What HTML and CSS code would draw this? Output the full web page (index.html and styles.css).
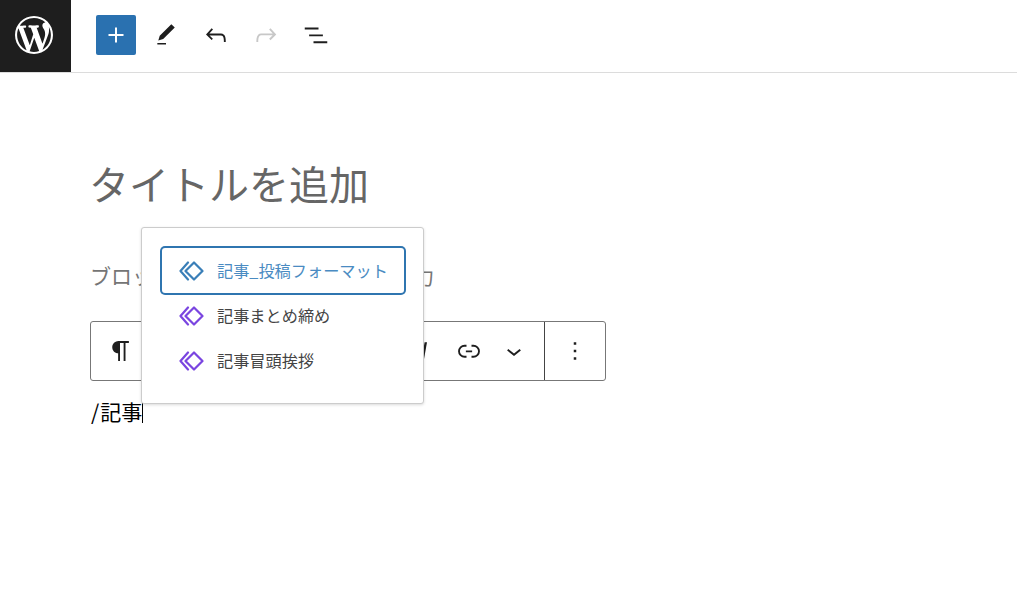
FILE: index.html
```html
<!DOCTYPE html>
<html lang="ja">
<head>
<meta charset="utf-8">
<title>記事</title>
<link rel="stylesheet" href="styles.css">
</head>
<body>
<header class="topbar">
  <a class="logo"><svg width="38" height="38" viewBox="0 0 20 20" fill="#fff"><path d="M20 10c0-5.51-4.49-10-10-10C4.48 0 0 4.49 0 10c0 5.52 4.48 10 10 10 5.51 0 10-4.48 10-10zM7.78 15.37L4.37 6.22c.55-.02 1.17-.08 1.17-.08.5-.06.44-1.13-.06-1.11 0 0-1.45.11-2.37.11-.18 0-.37 0-.58-.01C4.12 2.69 6.87 1.11 10 1.11c2.33 0 4.45.87 6.05 2.34-.68-.11-1.65.39-1.65 1.58 0 .74.45 1.36.9 2.1.35.61.55 1.36.55 2.46 0 1.49-1.4 5-1.4 5l-3.03-8.37c.54-.02.82-.17.82-.17.5-.05.44-1.25-.06-1.22 0 0-1.44.12-2.38.12-.87 0-2.33-.12-2.33-.12-.5-.03-.56 1.2-.06 1.22l.92.08 1.26 3.41zM17.41 10c.24-.64.74-1.87.43-4.25.7 1.29 1.05 2.71 1.05 4.25 0 3.29-1.73 6.24-4.4 7.78.97-2.59 1.94-5.2 2.92-7.78zM6.1 18.09C3.12 16.65 1.11 13.53 1.11 10c0-1.3.23-2.48.72-3.59C3.25 10.3 4.67 14.2 6.1 18.09zm4.03-6.63l2.58 6.98c-.86.29-1.76.45-2.71.45-.79 0-1.57-.11-2.29-.33.81-2.38 1.62-4.74 2.42-7.1z"/></svg></a>
  <div class="tools">
    <button class="tool tool-add"><svg width="30" height="30" viewBox="0 0 24 24"><path d="M18 11.2h-5.2V6h-1.6v5.2H6v1.6h5.2V18h1.6v-5.2H18z"/></svg></button>
    <button class="tool"><svg width="26" height="26" viewBox="0 0 24 24"><path d="M20.1 5.1L16.9 2 6.2 12.7l-1.3 4.4 4.5-1.3L20.1 5.1zM4 20.8h8v-1.5H4v1.5z"/></svg></button>
    <button class="tool"><svg width="30" height="30" viewBox="0 0 24 24"><path d="M18.3 11.7c-.6-.6-1.4-.9-2.3-.9H6.7l2.9-3.3-1.1-1-4.5 5L8.5 16l1-1-2.7-2.7H16c.5 0 .9.2 1.3.5 1 1 1 3.4 1 4.5v.3h1.5v-.2c0-1.5 0-4.3-1.5-5.7z"/></svg></button>
    <button class="tool tool-off"><svg width="30" height="30" viewBox="0 0 24 24"><path d="M15.6 6.5l-1.1 1 2.9 3.3H8c-.9 0-1.7.3-2.3.9-1.4 1.5-1.4 4.2-1.4 5.6v.2h1.5v-.3c0-1.1 0-3.5 1-4.5.3-.3.7-.5 1.3-.5h9.2L14.5 15l1.1 1.1 4.6-4.6-4.6-5z"/></svg></button>
    <button class="tool"><svg width="30" height="30" viewBox="0 0 24 24"><path d="M3 6h11v1.500H3V6zm3.500 5.500h11V13h-11v-1.500zM21 17H10v1.500h11V17z"/></svg></button>
  </div>
</header>
<main class="editor">
  <h1 class="title">タイトルを追加</h1>
  <p class="placeholder">ブロックを選択するには「/」を入力</p>
  <div class="block-toolbar">
    <div class="group-block">
      <button class="fmt"><svg width="30" height="30" viewBox="0 0 24 24"><path d="M18.3 4H9.9v-.1l-.9.2c-2.3.4-4 2.4-4 4.8s1.7 4.4 4 4.8l.7.1V20h1.5V5.500h2.900V20h1.500V5.500h2.700V4z"/></svg></button>
    </div>
    <div class="group-format">
      <button class="fmt"><svg width="30" height="30" viewBox="0 0 24 24"><path d="M12.500 5L10 19h1.900l2.500-14z"/></svg></button>
      <button class="fmt"><svg width="30" height="30" viewBox="0 0 24 24"><path d="M10 17.389H8.444A5.194 5.194 0 1 1 8.444 7H10v1.500H8.444a3.694 3.694 0 0 0 0 7.389H10v1.500ZM14 7h1.556a5.194 5.194 0 0 1 0 10.390H14v-1.500h1.556a3.694 3.694 0 0 0 0-7.390H14V7Zm-4.500 6h5v-1.500h-5V13Z"/></svg></button>
      <button class="fmt"><svg width="30" height="30" viewBox="0 0 24 24"><path d="M17.500 11.600L12 16l-5.500-4.400.9-1.200L12 14l4.500-3.600 1 1.200z"/></svg></button>
    </div>
    <div class="group-more">
      <button class="fmt"><svg width="30" height="30" viewBox="0 0 24 24"><path d="M13 19h-2v-2h2v2zm0-6h-2v-2h2v2zm0-6h-2V5h2v2z"/></svg></button>
    </div>
  </div>
  <p class="typed"><span class="slash">/</span>記事<span class="caret"></span></p>
  <ul class="popover">
    <li class="item item-active"><svg class="pattern" width="26" height="20" viewBox="0 0 26 20"><path d="M15 1.500L23.500 10L15 18.500L6.500 10Z"/><path d="M9 1.500L1.500 10L9 18.500"/></svg><span class="label">記事_投稿フォーマット</span></li>
    <li class="item"><svg class="pattern" width="26" height="20" viewBox="0 0 26 20"><path d="M15 1.500L23.500 10L15 18.500L6.500 10Z"/><path d="M9 1.500L1.500 10L9 18.500"/></svg><span class="label">記事まとめ締め</span></li>
    <li class="item"><svg class="pattern" width="26" height="20" viewBox="0 0 26 20"><path d="M15 1.500L23.500 10L15 18.500L6.500 10Z"/><path d="M9 1.500L1.500 10L9 18.500"/></svg><span class="label">記事冒頭挨拶</span></li>
  </ul>
</main>
</body>
</html>
```
FILE: styles.css
```css
* { box-sizing: border-box; }
html, body { margin: 0; padding: 0; }
body {
  background: #fff;
  color: #1e1e1e;
  font-family: "Noto Sans CJK JP", "Noto Sans", sans-serif;
  overflow: hidden;
}
button { border: 0; background: none; padding: 0; margin: 0; display: flex; align-items: center; justify-content: center; }
svg { display: block; }

.topbar {
  display: flex;
  align-items: flex-start;
  height: 73px;
  border-bottom: 1px solid #dcdcdc;
}
.logo {
  width: 71px;
  height: 72px;
  padding: 16px 0 0 15px;
  background: #1e1e1e;
}
.tools {
  display: flex;
  gap: 10px;
  margin: 15px 0 0 25px;
}
.tool { width: 40px; height: 40px; border-radius: 2px; fill: #1e1e1e; }
.tool-add { background: #2a71b0; fill: #fff; }
.tool-off { fill: #c8c8c8; }

.editor {
  position: relative;
  padding: 82px 0 0 91px;
}
.title {
  margin: 0 0 0 -2px;
  font-size: 40px;
  line-height: 56px;
  font-weight: 400;
  color: #666;
}
.placeholder {
  margin: 49px 0 0 -1px;
  font-size: 21px;
  line-height: 30px;
  color: #757575;
}
.block-toolbar {
  display: flex;
  width: 516px;
  height: 60px;
  margin: 31px 0 0 -1px;
  border: 1px solid #777;
  border-radius: 3px;
}
.group-block { width: 60px; display: flex; justify-content: center; }
.group-format { flex: 1; display: flex; justify-content: flex-end; padding-right: 8px; }
.group-more { width: 61px; border-left: 1px solid #444; display: flex; justify-content: center; }
.fmt { width: 45px; height: 58px; fill: #1e1e1e; }
.typed {
  margin: 15px 0 0;
  font-size: 21px;
  line-height: 30px;
  color: #000;
}
.slash { margin-right: 1px; }
.caret {
  display: inline-block;
  width: 1px;
  height: 20px;
  vertical-align: -3px;
  background: #000;
}

.popover {
  position: absolute;
  left: 141px;
  top: 154px;
  width: 283px;
  margin: 0;
  padding: 20px 19px 20px 20px;
  list-style: none;
  background: #fff;
  border: 1px solid #ccc;
  border-radius: 3px;
  box-shadow: 0 1px 3px rgba(0, 0, 0, .15);
}
.item {
  display: flex;
  align-items: center;
  gap: 12px;
  height: 45px;
  padding-left: 17px;
  font-size: 16.2px;
  color: #444;
  white-space: nowrap;
}
.label { line-height: 22px; margin-bottom: 2px; }
.pattern { fill: none; stroke: #7a45e0; stroke-width: 2.2; stroke-linejoin: round; stroke-linecap: round; }
.item-active {
  color: #4a8bc2;
  border-radius: 3px;
  box-shadow: 0 0 0 2px #2f75b0;
}
.item-active .pattern { stroke: #3a7fb8; }
```
